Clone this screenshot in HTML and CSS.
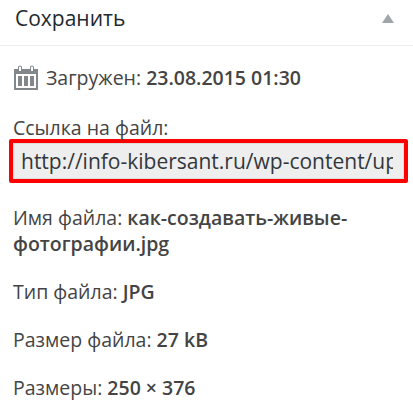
FILE: index.html
```html
<!DOCTYPE html>
<html>
<head>
    <meta charset="UTF-8">
    <title>Сохранить</title>
    <link rel="stylesheet" href="styles.css">
</head>
<body>
    <div class="box">
        <div class="box-header">
            <h2>Сохранить</h2>
            <span class="toggle"></span>
        </div>
        <div class="box-body">
            <div class="uploaded">
                <svg class="calendar" width="26" height="26" viewBox="0 0 26 26">
                    <path fill="#82878c" d="M1 4h4V2.5a2 2 0 0 1 4 0V4h8V2.5a2 2 0 0 1 4 0V4h4v21H1z"/>
                    <path fill="#fff" d="M6 2.5a1 1 0 0 1 2 0V6H6zM18 2.5a1 1 0 0 1 2 0V6h-2zM3 9h20v14H3z"/>
                    <path fill="#82878c" d="M5 11h4v10H5zM11 11h4v10h-4zM17 11h4v10h-4z"/>
                </svg>
                <span>Загружен: <b>23.08.2015 01:30</b></span>
            </div>
            <div class="file-url">
                <label for="url">Ссылка на файл:</label>
                <div class="url-frame">
                    <input id="url" type="text" readonly value="http://info-kibersant.ru/wp-content/uploads/2015/08/kak-sozdavat-zhivye-fotografii.jpg">
                </div>
            </div>
            <div class="meta">Имя файла: <b>как-создавать-живые-фотографии.jpg</b></div>
            <div class="meta">Тип файла: <b>JPG</b></div>
            <div class="meta">Размер файла: <b>27 kB</b></div>
            <div class="meta">Размеры: <b>250 × 376</b></div>
        </div>
    </div>
</body>
</html>
```

FILE: styles.css
```css
* {
    margin: 0;
    padding: 0;
    box-sizing: border-box;
}

body {
    font-family: "Open Sans", sans-serif;
    background-color: #ffffff;
    color: #444;
    overflow: hidden;
}

.box-header {
    display: flex;
    justify-content: space-between;
    align-items: center;
    height: 46px;
    padding: 0 19px 9px 15px;
    border-bottom: 1px solid #eeeeee;
}

h2 {
    font-size: 21px;
    font-weight: 400;
    color: #23282d;
}

.toggle {
    width: 0;
    height: 0;
    margin-top: 1px;
    border-left: 6px solid transparent;
    border-right: 6px solid transparent;
    border-bottom: 9px solid #a0a5aa;
}

.box-body {
    padding: 0 5px 0 13px;
    font-size: 19.5px;
    line-height: 26px;
}

b {
    font-weight: 600;
}

.uploaded {
    display: flex;
    align-items: center;
    gap: 7px;
    margin-top: 16px;
    height: 32px;
}

.file-url {
    margin-top: 21px;
}

.file-url label {
    display: block;
    margin-bottom: -2px;
}

.url-frame {
    margin-left: -4px;
    border: 4px solid #ff0000;
    border-radius: 2px;
}

#url {
    display: block;
    width: 100%;
    height: 36px;
    padding: 0 10px 0 7px;
    border: 1px solid #dddddd;
    background-color: #eeeeee;
    color: #32373c;
    font-family: "Open Sans", sans-serif;
    font-size: 21px;
    outline: none;
}

.meta {
    margin-top: 22px;
}
```
